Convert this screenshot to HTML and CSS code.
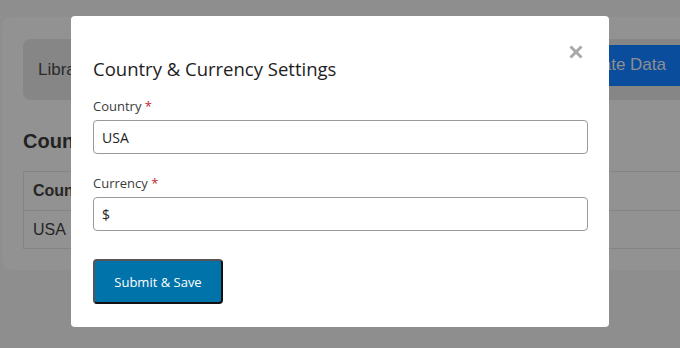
FILE: index.html
```html
<!DOCTYPE html>
<html lang="en">
<head>
<meta charset="utf-8">
<title>Country &amp; Currency Settings</title>
<link rel="stylesheet" href="styles.css">
</head>
<body>
<div class="page">
  <div class="card">
    <div class="toolbar">
      <span class="toolbar-title">Library</span>
      <button class="btn-update">Update Data</button>
    </div>
    <h2 class="list-title">Country &amp; Currency List</h2>
    <table class="list">
      <thead>
        <tr><th>Country</th><th>Currency</th><th>Actions</th></tr>
      </thead>
      <tbody>
        <tr><td>USA</td><td>$</td><td></td></tr>
      </tbody>
    </table>
  </div>
</div>

<div class="modal">
  <button class="close" aria-label="Close">
    <svg width="14" height="14" viewBox="0 0 14 14"><path d="M1.5 1.5 L12.5 12.5 M12.5 1.5 L1.5 12.5" stroke="#a9a9a9" stroke-width="3" fill="none"/></svg>
  </button>
  <h3 class="modal-title">Country &amp; Currency Settings</h3>
  <form class="form">
    <label class="field">
      <span class="label">Country <span class="req">*</span></span>
      <input class="input" type="text" value="USA">
    </label>
    <label class="field">
      <span class="label">Currency <span class="req">*</span></span>
      <input class="input" type="text" value="$">
    </label>
    <div class="actions">
      <button type="button" class="btn-submit">Submit &amp; Save</button>
    </div>
  </form>
</div>
</body>
</html>
```

FILE: styles.css
```css
html, body {
  margin: 0;
  padding: 0;
  width: 680px;
  height: 348px;
  overflow: hidden;
  background: #8e8e8e;
  font-family: "Liberation Sans", Arial, sans-serif;
}

.page {
  padding: 17px 0 0 2px;
}

.card {
  width: 720px;
  height: 253px;
  box-sizing: border-box;
  background: #929292;
  border-radius: 8px;
  padding: 22px 21px 0 21px;
}

.toolbar {
  height: 61px;
  background: #868686;
  border-radius: 8px;
  display: flex;
  align-items: center;
  padding-left: 15px;
}

.toolbar-title {
  font-size: 17px;
  color: #2b2b2b;
}

.btn-update {
  margin-left: auto;
  margin-right: 21px;
  height: 41px;
  margin-top: -9px;
  padding: 0 14px;
  border: none;
  background: #0a4d9d;
  color: #8f8f8f;
  font-family: "Liberation Sans", Arial, sans-serif;
  font-size: 17px;
}

.list-title {
  margin: 30px 0 0 0;
  font-size: 20px;
  line-height: 23px;
  font-weight: bold;
  color: #222;
}

.list {
  margin-top: 18px;
  width: 100%;
  border-collapse: collapse;
}

.list th, .list td {
  border: 1px solid #848484;
  text-align: left;
  padding: 0 9px;
  font-size: 16px;
  color: #262626;
}

.list th {
  height: 38px;
  font-weight: bold;
}

.list td {
  height: 37px;
}

.modal {
  position: absolute;
  left: 71px;
  top: 16px;
  width: 538px;
  height: 311px;
  box-sizing: border-box;
  background: #fff;
  border-radius: 4px;
  padding: 41px 21px 22px 22px;
  font-family: "Open Sans", "Noto Sans", sans-serif;
}

.close {
  position: absolute;
  top: 29px;
  right: 26px;
  padding: 0;
  border: none;
  background: none;
  width: 14px;
  height: 14px;
  display: flex;
}

.modal-title {
  margin: 0;
  font-size: 18.5px;
  line-height: 24px;
  font-weight: normal;
  color: #1e1e1e;
}

.form {
  display: flex;
  flex-direction: column;
  margin-top: 16px;
}

.field {
  display: flex;
  flex-direction: column;
  gap: 4px;
  margin-bottom: 20px;
}

.label {
  font-size: 13px;
  line-height: 19px;
  color: #3c3c3c;
}

.req {
  color: #c0272d;
}

.input {
  height: 34px;
  box-sizing: border-box;
  border: 1px solid #9a9a9a;
  border-radius: 4px;
  padding: 0 8px;
  font-family: "Open Sans", "Noto Sans", sans-serif;
  font-size: 14px;
  color: #1e1e1e;
  outline: none;
}

.actions {
  margin-top: 8px;
  display: flex;
}

.btn-submit {
  width: 130px;
  height: 45px;
  box-sizing: border-box;
  background: #0073aa;
  color: #fff;
  border: 2px solid #555;
  border-right-color: #111;
  border-bottom-color: #111;
  border-radius: 4px;
  font-family: "Open Sans", "Noto Sans", sans-serif;
  font-size: 13px;
}
```
